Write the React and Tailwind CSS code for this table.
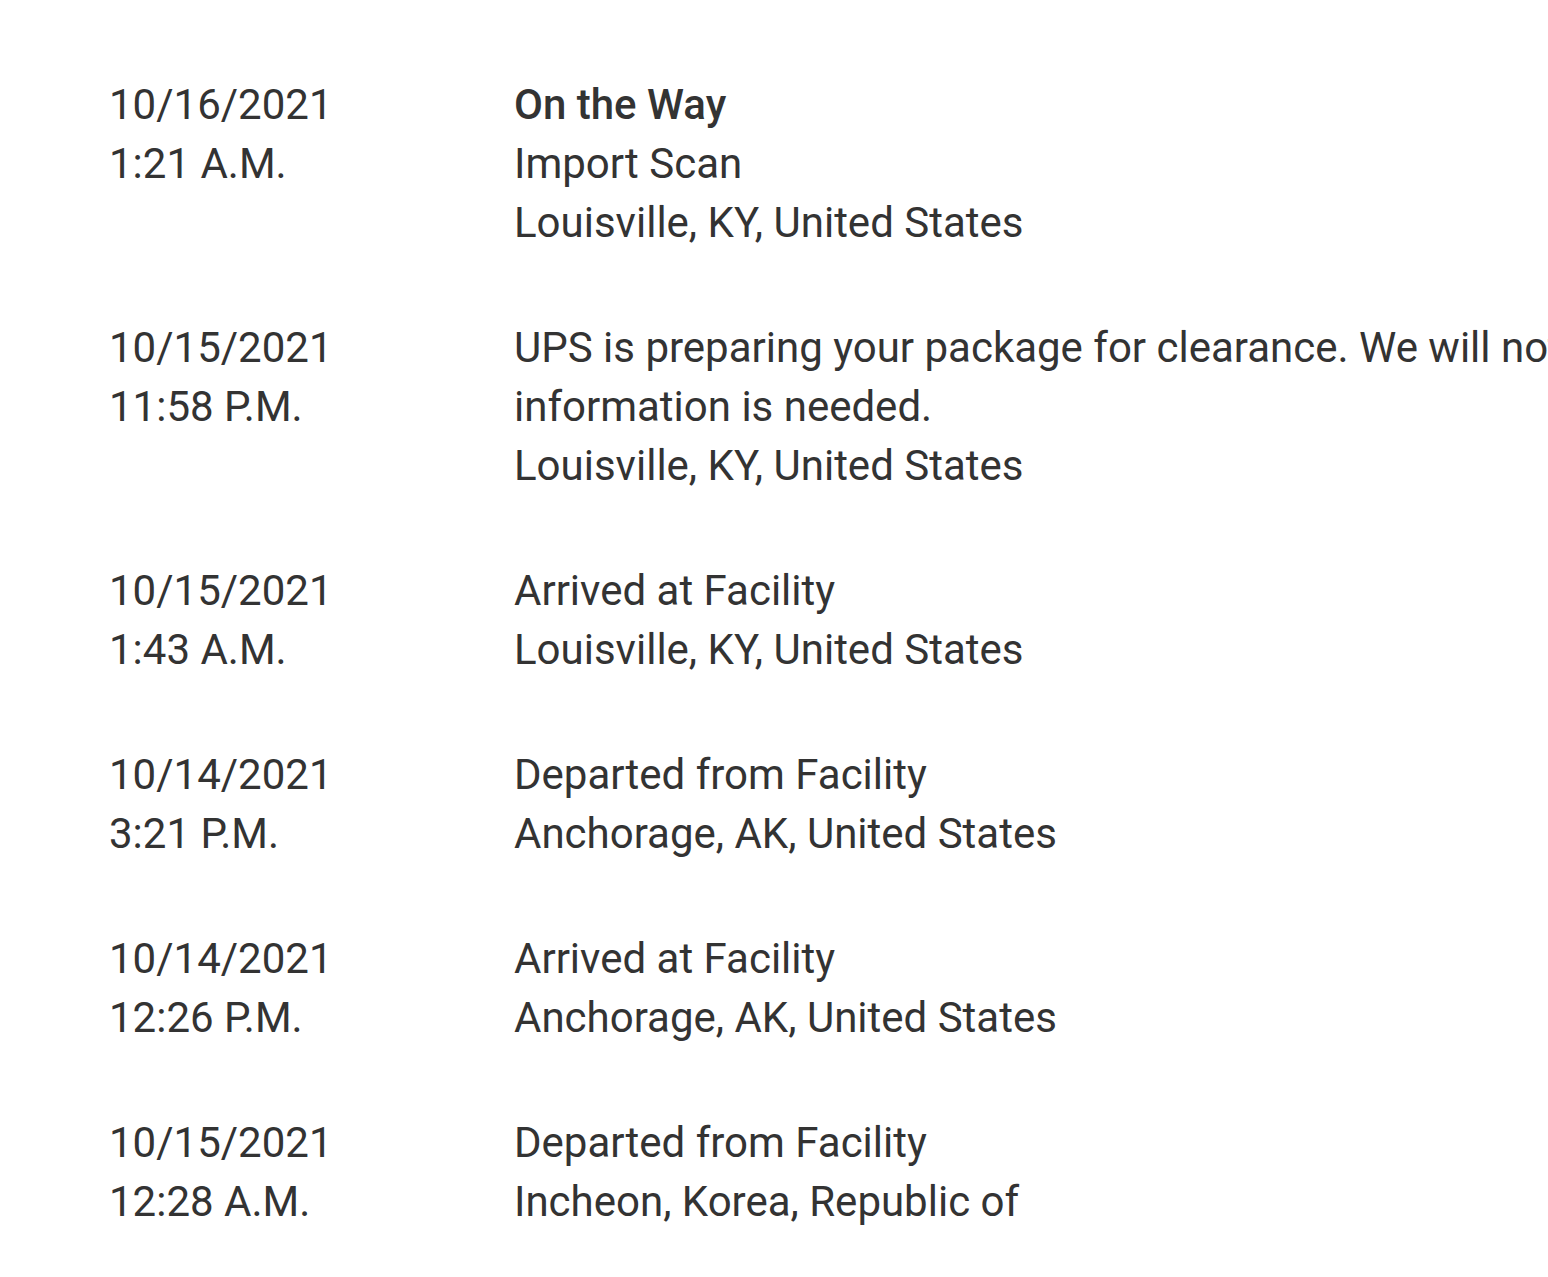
import React from 'react';

const events = [
    { date: '10/16/2021', time: '1:21 A.M.', status: 'On the Way', lines: ['Import Scan', 'Louisville, KY, United States'] },
    { date: '10/15/2021', time: '11:58 P.M.', lines: ['UPS is preparing your package for clearance. We will notify you if additional information is needed.', 'Louisville, KY, United States'] },
    { date: '10/15/2021', time: '1:43 A.M.', lines: ['Arrived at Facility', 'Louisville, KY, United States'] },
    { date: '10/14/2021', time: '3:21 P.M.', lines: ['Departed from Facility', 'Anchorage, AK, United States'] },
    { date: '10/14/2021', time: '12:26 P.M.', lines: ['Arrived at Facility', 'Anchorage, AK, United States'] },
    { date: '10/15/2021', time: '12:28 A.M.', lines: ['Departed from Facility', 'Incheon, Korea, Republic of'] },
];

const App = () => {
    return (
        <div
            className="w-[1548px] h-[1277px] overflow-hidden bg-white text-[#333333] text-[42px] leading-[59px]"
            style={{ fontFamily: 'Roboto, "Liberation Sans", sans-serif' }}
        >
            <div className="flex flex-col gap-[66px] pt-[75px] pl-[109px]">
                {events.map((ev, i) => (
                    <div key={i} className="flex">
                        <div className="w-[405px] shrink-0">
                            <div>{ev.date}</div>
                            <div>{ev.time}</div>
                        </div>
                        <div className="w-[1580px] shrink-0">
                            {ev.status && <div className="font-medium">{ev.status}</div>}
                            {ev.lines.map((line, j) => (
                                <div key={j}>{line}</div>
                            ))}
                        </div>
                    </div>
                ))}
            </div>
        </div>
    );
};

export default App;
